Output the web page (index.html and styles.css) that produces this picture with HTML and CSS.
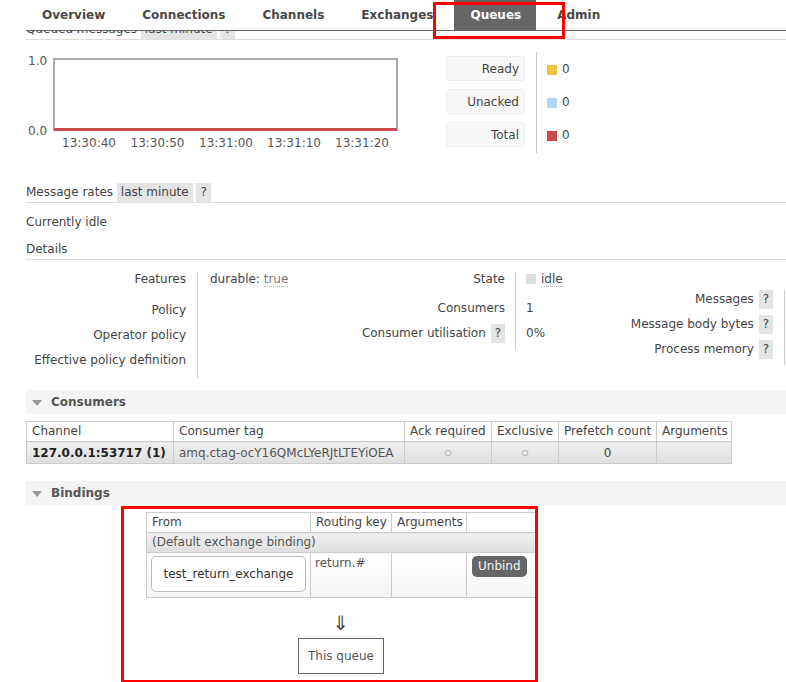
FILE: index.html
```html
<!DOCTYPE html>
<html>
<head>
<meta charset="utf-8">
<title>Queue</title>
<link rel="stylesheet" href="styles.css">
</head>
<body>
<div class="nav">
  <a class="tab">Overview</a>
  <a class="tab">Connections</a>
  <a class="tab">Channels</a>
  <a class="tab">Exchanges</a>
  <a class="tab active">Queues</a>
  <a class="tab">Admin</a>
</div>

<div class="main">
  <h3 class="heading">Queued messages <span class="pill">last minute</span> <span class="pill">?</span></h3>

  <div class="chart-row">
    <div class="chart">
      <span class="ylab y1">1.0</span>
      <span class="ylab y0">0.0</span>
      <div class="plot"><div class="zero"></div></div>
      <span class="xlab x1">13:30:40</span>
      <span class="xlab x2">13:30:50</span>
      <span class="xlab x3">13:31:00</span>
      <span class="xlab x4">13:31:10</span>
      <span class="xlab x5">13:31:20</span>
    </div>
    <div class="legend">
      <div class="leg-labels">
        <div class="leg-box">Ready</div>
        <div class="leg-box">Unacked</div>
        <div class="leg-box">Total</div>
      </div>
      <div class="leg-values">
        <div class="leg-val"><i class="sw sw-ready"></i>0</div>
        <div class="leg-val"><i class="sw sw-unacked"></i>0</div>
        <div class="leg-val"><i class="sw sw-total"></i>0</div>
      </div>
    </div>
  </div>

  <h3 class="heading rates">Message rates <span class="pill">last minute</span> <span class="pill">?</span></h3>
  <p class="idle">Currently idle</p>
  <h3 class="heading details">Details</h3>

  <div class="details-row">
    <table class="kv kv1">
      <tr class="r31"><th>Features</th><td>durable: <span class="dotted light">true</span></td></tr>
      <tr class="r25"><th>Policy</th><td></td></tr>
      <tr class="r25"><th>Operator policy</th><td></td></tr>
      <tr class="r25"><th>Effective policy definition</th><td></td></tr>
    </table>
    <table class="kv kv2">
      <tr class="r29"><th>State</th><td><i class="state-sq"></i><span class="dotted">idle</span></td></tr>
      <tr class="r25"><th>Consumers</th><td>1</td></tr>
      <tr class="r24"><th>Consumer utilisation <span class="help">?</span></th><td>0%</td></tr>
    </table>
    <table class="kv kv3">
      <tr class="r25"><th>Messages <span class="help">?</span></th><td></td></tr>
      <tr class="r25"><th>Message body bytes <span class="help">?</span></th><td></td></tr>
      <tr class="r25"><th>Process memory <span class="help">?</span></th><td></td></tr>
    </table>
  </div>

  <div class="section-head consumers-head"><i class="tri"></i><span>Consumers</span></div>
  <table class="list consumers">
    <colgroup>
      <col class="c1"><col class="c2"><col class="c3"><col class="c4"><col class="c5"><col class="c6">
    </colgroup>
    <tr><th>Channel</th><th>Consumer tag</th><th>Ack required</th><th>Exclusive</th><th>Prefetch count</th><th>Arguments</th></tr>
    <tr class="grey-row">
      <td class="strong">127.0.0.1:53717 (1)</td>
      <td class="muted">amq.ctag-ocY16QMcLYeRJtLTEYiOEA</td>
      <td class="center muted"><span class="circ">○</span></td>
      <td class="center muted"><span class="circ">○</span></td>
      <td class="center">0</td>
      <td></td>
    </tr>
  </table>

  <div class="section-head bindings-head"><i class="tri"></i><span>Bindings</span></div>
  <div class="bindings">
    <table class="list btable">
      <colgroup>
        <col class="b1"><col class="b2"><col class="b3"><col class="b4">
      </colgroup>
      <tr><th>From</th><th>Routing key</th><th>Arguments</th><th></th></tr>
      <tr class="grey-row"><td colspan="4" class="muted">(Default exchange binding)</td></tr>
      <tr class="data-row">
        <td><div class="exch">test_return_exchange</div></td>
        <td class="muted">return.#</td>
        <td></td>
        <td><span class="btn">Unbind</span></td>
      </tr>
    </table>
    <div class="arrow">⇓</div>
    <div class="this-queue">This queue</div>
  </div>
</div>

<div class="mark mark-tab"></div>
<div class="mark mark-bind"></div>
</body>
</html>
```

FILE: styles.css
```css
html, body {
  margin: 0;
  padding: 0;
  overflow: hidden;
}
body {
  font-family: "DejaVu Sans", Verdana, sans-serif;
  font-size: 12px;
  color: #444;
  background: #fff;
  width: 786px;
  height: 682px;
  position: relative;
}

/* navigation (sticky header over the scrolled content) */
.nav {
  position: absolute;
  top: 0;
  left: 26px;
  right: 0;
  height: 30px;
  background: #fff;
  border-bottom: 1px solid #666;
  display: flex;
  gap: 5px;
  z-index: 2;
}
.tab {
  display: block;
  padding: 0 16px;
  line-height: 30px;
  font-weight: bold;
  color: #484848;
}
.tab.active {
  background: #666;
  color: #fff;
  padding-right: 15px;
}

.main {
  padding: 20px 0 0 26px;
}

.heading {
  margin: 0;
  font-size: 12px;
  font-weight: normal;
  line-height: 19px;
  height: 19px;
  border-bottom: 1px solid #ddd;
  color: #444;
}
.pill {
  display: inline-block;
  background: #e4e4e4;
  padding: 0 4px;
}

/* chart */
.chart-row {
  display: flex;
  align-items: flex-start;
  margin-top: 12px;
  height: 100px;
}
.chart {
  position: relative;
  width: 372px;
  height: 100px;
  flex: none;
}
.ylab, .xlab {
  position: absolute;
  line-height: 15px;
  color: #555;
}
.ylab { left: 2px; }
.y1 { top: 1.5px; }
.y0 { top: 71.5px; }
.plot {
  position: absolute;
  left: 27px;
  top: 6px;
  width: 345px;
  height: 73px;
  box-sizing: border-box;
  border: 2px solid #aaa;
}
.zero {
  position: absolute;
  left: -1px;
  right: -1px;
  bottom: -2px;
  height: 3px;
  background: #cb4b4b;
}
.xlab {
  top: 83.5px;
  transform: translateX(-50%);
}
.x1 { left: 63px; }
.x2 { left: 131.5px; }
.x3 { left: 200px; }
.x4 { left: 268px; }
.x5 { left: 336px; }

.legend {
  display: flex;
  margin-left: 48px;
}
.leg-labels {
  padding-top: 4px;
  margin-right: 11px;
}
.leg-box {
  width: 79px;
  height: 25px;
  box-sizing: border-box;
  background: #f8f8f8;
  border: 1px solid #eee;
  border-radius: 3px;
  text-align: right;
  padding-right: 5px;
  line-height: 25px;
  margin-bottom: 8px;
}
.leg-values {
  border-left: 1px solid #ccc;
  height: 96px;
  padding: 5px 0 0 10px;
}
.leg-val {
  height: 25px;
  line-height: 27px;
  margin-bottom: 8px;
  display: flex;
  align-items: center;
}
.sw {
  display: inline-block;
  width: 10px;
  height: 10px;
  margin-right: 5px;
}
.sw-ready { background: #edc240; }
.sw-unacked { background: #afd8f8; }
.sw-total { background: #cb4b4b; }

.rates { margin-top: 31px; }
.idle {
  margin: 10px 0 0;
  line-height: 19px;
}
.details { margin-top: 8px; }

/* details key/value tables */
.details-row {
  display: flex;
  align-items: flex-start;
  margin-top: 12px;
}
.kv {
  border-collapse: separate;
  border-spacing: 0;
  flex: none;
}
.kv th, .kv td {
  padding: 0;
  vertical-align: top;
  line-height: 15px;
  font-weight: normal;
}
.kv th {
  text-align: right;
  color: #444;
}
.kv td {
  border-left: 1px solid #ccc;
}
.r31 th, .r31 td { height: 31px; }
.r29 th, .r29 td { height: 29px; }
.r25 th, .r25 td { height: 25px; }
.r24 th, .r24 td { height: 24px; }

.kv1 th { width: 160px; padding-right: 11px; }
.kv1 td { width: 128px; padding-left: 12px; }
.kv2 th { width: 167px; padding-right: 10px; }
.kv2 td { width: 74px; padding-left: 10px; }
.kv3 { margin-top: 18px; }
.kv3 th { width: 173px; padding-right: 11px; line-height: 19px; }
.kv3 td { width: 1px; }

.help {
  display: inline-block;
  background: #e4e4e4;
  padding: 0 4px;
  line-height: 19px;
  margin: -2px 0 -2px 1px;
}
.kv3 .help { margin: 0 0 0 1px; }

.dotted {
  border-bottom: 1px dotted #bbb;
}
.light { color: #777; }
.state-sq {
  display: inline-block;
  width: 10px;
  height: 10px;
  background: #ddd;
  margin-right: 5px;
  vertical-align: -1px;
}

/* section headers */
.section-head {
  display: flex;
  align-items: center;
  height: 24px;
  background: #f4f4f4;
  font-weight: bold;
  color: #555;
}
.tri {
  display: block;
  width: 0;
  height: 0;
  border-left: 5px solid transparent;
  border-right: 5px solid transparent;
  border-top: 6px solid #999;
  margin: 1px 9px 0 6px;
}
.consumers-head { margin-top: 12px; }
.bindings-head { margin-top: 17px; }

/* list tables */
.list {
  border-collapse: collapse;
  table-layout: fixed;
}
.list th, .list td {
  border: 1px solid #ccc;
  padding: 0 5px;
  text-align: left;
  font-weight: normal;
  white-space: nowrap;
  overflow: hidden;
}
.list th {
  background: #fff;
  line-height: 19px;
  color: #444;
}
.list .grey-row td {
  background: linear-gradient(#f0f0f0, #dedede);
  line-height: 19px;
}
.consumers {
  margin-top: 7px;
  width: 705px;
}
.consumers .grey-row td { line-height: 20px; }
.c1 { width: 147px; }
.c2 { width: 231px; }
.c3 { width: 87px; }
.c4 { width: 67px; }
.c5 { width: 98px; }
.c6 { width: 75px; }
.list td.strong { font-weight: bold; color: #222; }
.list td.muted { color: #555; }
.list td.center { text-align: center; }
.circ {
  font-size: 8px;
  color: #777;
  vertical-align: 1px;
}

/* bindings */
.bindings {
  margin: 7px 0 0 120px;
  width: 390px;
  text-align: center;
}
.btable { width: 390px; }
.b1 { width: 164px; }
.b2 { width: 81px; }
.b3 { width: 75px; }
.b4 { width: 70px; }
.list .data-row td {
  background: linear-gradient(#fff, #f4f4f4);
  height: 38px;
  vertical-align: top;
  padding: 3px 4px;
  line-height: 15px;
}
.exch {
  border: 1px solid #bbb;
  border-radius: 5px;
  background: #fff;
  text-align: center;
  padding: 10px 0;
  line-height: 14px;
  color: #333;
}
.btn {
  display: inline-block;
  background: #666;
  color: #f4f4f4;
  border-radius: 5px;
  padding: 0 6px;
  line-height: 21px;
  margin-left: 1px;
}
.arrow {
  margin-top: 15px;
  font-size: 20px;
  line-height: 21px;
  color: #444;
}
.this-queue {
  display: inline-block;
  margin-top: 4px;
  border: 1px solid #666;
  padding: 10px 9px;
  line-height: 14px;
  color: #555;
}

/* red annotation boxes drawn over the screenshot */
.mark {
  position: absolute;
  box-sizing: border-box;
  border: 3px solid #f00;
  z-index: 5;
}
.mark-tab {
  left: 433px;
  top: 2px;
  width: 132px;
  height: 37px;
}
.mark-bind {
  left: 121px;
  top: 506px;
  width: 417px;
  height: 177px;
}
```
